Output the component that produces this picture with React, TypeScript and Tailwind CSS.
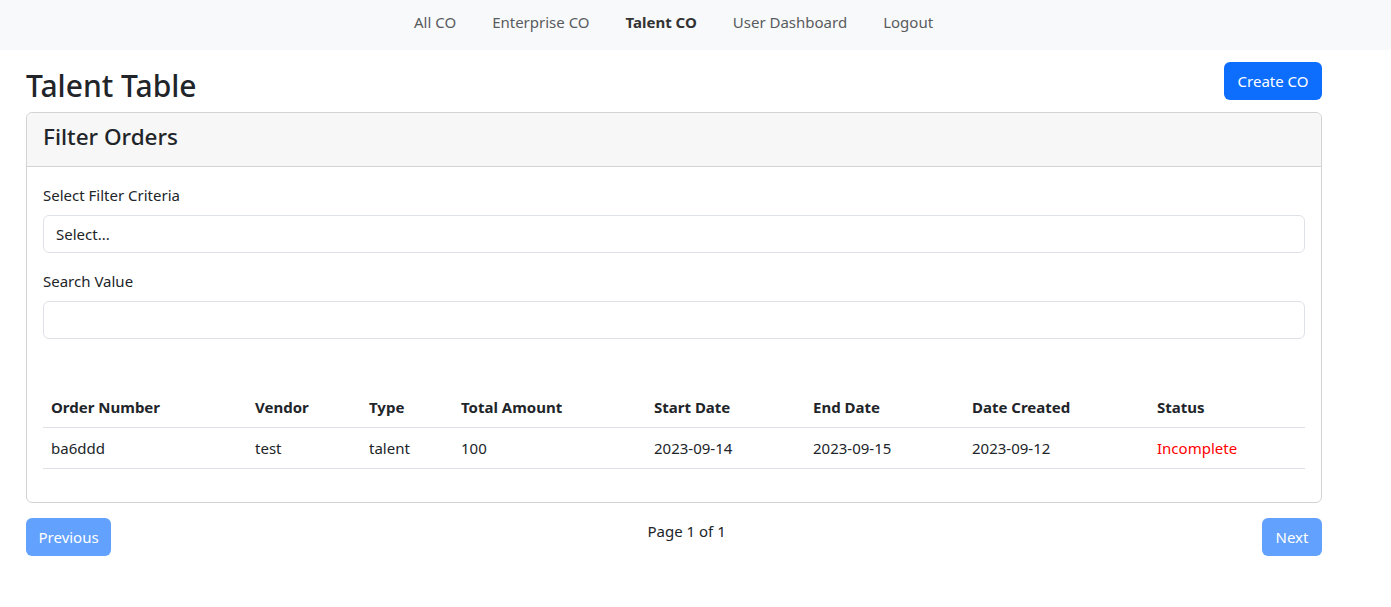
import React from "react";

const cols = [
  { h: "Order Number", v: "ba6ddd", w: "w-[204px]" },
  { h: "Vendor", v: "test", w: "w-[114px]" },
  { h: "Type", v: "talent", w: "w-[92px]" },
  { h: "Total Amount", v: "100", w: "w-[193px]" },
  { h: "Start Date", v: "2023-09-14", w: "w-[159px]" },
  { h: "End Date", v: "2023-09-15", w: "w-[159px]" },
  { h: "Date Created", v: "2023-09-12", w: "w-[185px]" },
  { h: "Status", v: "Incomplete", w: "" },
];

export default function App() {
  return (
    <div className="min-h-[607px] bg-white text-[#212529] font-['Noto_Sans',sans-serif] text-[16px]">
      <nav className="h-[50px] bg-[#f8f9fa] flex items-start">
        <ul className="flex items-center gap-[36px] ml-[414px] mt-[10px] text-[15px] leading-[24px]">
          <li className="text-[#595c5f]">All CO</li>
          <li className="text-[#595c5f]">Enterprise CO</li>
          <li className="text-[#333] font-bold">Talent CO</li>
          <li className="text-[#595c5f]">User Dashboard</li>
          <li className="text-[#595c5f]">Logout</li>
        </ul>
      </nav>
      <main className="ml-[26px] w-[1296px]">
        <div className="flex justify-between items-start mt-[12px] h-[50px]">
          <h1 className="text-[30px] font-medium leading-[38px] mt-[5px]">Talent Table</h1>
          <button className="h-[38px] px-[13.5px] rounded-[6px] bg-[#0d6efd] text-white text-[15px]">
            Create CO
          </button>
        </div>
        <div className="border border-[#d3d3d3] rounded-[6px]">
          <div className="bg-[#f7f7f7] border-b border-[#d3d3d3] px-[16px] pt-[9px] pb-[15px] rounded-t-[6px]">
            <h4 className="text-[22.5px] font-medium leading-[29px]">Filter Orders</h4>
          </div>
          <div className="p-[16px]">
            <label className="block text-[15px] leading-[24px] mb-[8px]">Select Filter Criteria</label>
            <div className="h-[38px] border border-[#dee2e6] rounded-[6px] flex items-center px-[12px] text-[15px]">
              Select...
            </div>
            <label className="block text-[15px] leading-[24px] mb-[8px] mt-[16px]">Search Value</label>
            <div className="h-[38px] border border-[#dee2e6] rounded-[6px]" />
            <table className="mt-[49px] w-full border-collapse text-[15px] mb-[17px]">
              <thead>
                <tr className="border-b border-[#dee2e6]">
                  {cols.map((c) => (
                    <th key={c.h} className={`${c.w} text-left font-bold px-[8px] py-[8px] leading-[23px]`}>
                      {c.h}
                    </th>
                  ))}
                </tr>
              </thead>
              <tbody>
                <tr className="border-b border-[#dee2e6]">
                  {cols.map((c) => (
                    <td
                      key={c.h}
                      className={`px-[8px] py-[8px] leading-[24px] ${c.h === "Status" ? "text-[#ff0000]" : ""}`}
                    >
                      {c.v}
                    </td>
                  ))}
                </tr>
              </tbody>
            </table>
          </div>
        </div>
        <div className="flex justify-between items-start mt-[15px]">
          <button className="h-[38px] px-[12.5px] rounded-[6px] bg-[#62a1fe] text-white text-[15px]">Previous</button>
          <span className="text-[15px] leading-[24px] mt-[1px]">Page 1 of 1</span>
          <button className="h-[38px] px-[13.5px] rounded-[6px] bg-[#62a1fe] text-white text-[15px]">Next</button>
        </div>
      </main>
    </div>
  );
}
